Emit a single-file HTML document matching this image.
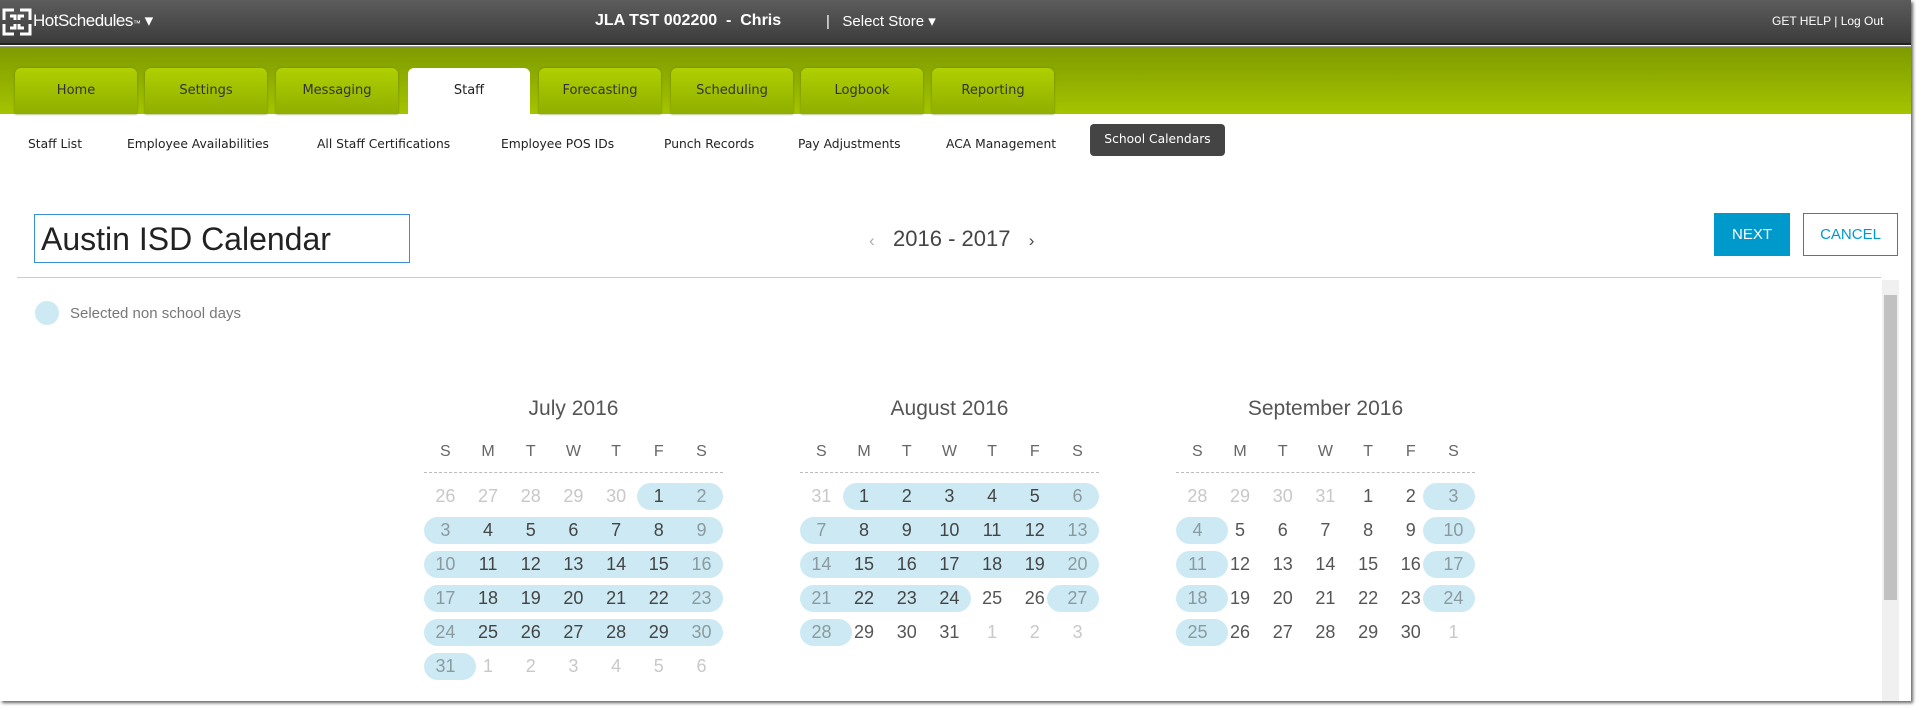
<!DOCTYPE html>
<html><head><meta charset="utf-8"><style>
*{margin:0;padding:0;box-sizing:border-box}
body{width:1927px;height:710px;overflow:hidden;background:#fff;font-family:"Liberation Sans",sans-serif;position:relative}
.win{position:absolute;left:0;top:0;width:1911px;height:701px;background:#fff;box-shadow:2px 2px 3px #666;overflow:hidden}
.top{position:absolute;left:0;top:0;width:100%;height:45px;background:linear-gradient(#5c5c5c,#3c3c3c);border-bottom:2px solid #222}
.green{position:absolute;left:0;top:46px;width:100%;height:68px;background:linear-gradient(#7f9a00,#a4c400);border-top:1px solid #999}
.tab{position:absolute;top:68px;width:122px;height:46px;border-radius:6px 6px 0 0;background:linear-gradient(#b0d000,#8fae00);color:#333;font-family:"DejaVu Sans",sans-serif;font-size:13px;text-align:center;line-height:46px;box-shadow:0 0 2px #6a8000}
.tab.on{background:#fff;color:#222;box-shadow:none}
.w{color:#fff;position:absolute;top:12px;font-size:15px}
.sub{position:absolute;top:137px;font-family:"DejaVu Sans",sans-serif;font-size:12.3px;color:#222}
.cal{position:absolute;top:397px;width:299px}
.cal h3{text-align:center;font-weight:normal;font-size:21px;color:#555;height:46px}
.hd{display:flex;color:#666;font-size:16px;height:30px;border-bottom:1px dashed #bbb;margin-bottom:10px}
.hd span,.r span{width:42.7px;text-align:center}
.r{display:flex;height:27px;line-height:27px;margin-bottom:7px;font-size:18px;color:#555}
.o{color:#c8c8c8}
.s{background:#cdeaf4;color:#444}
.g{color:#8a9a9f}
.l{border-radius:14px 0 0 14px}.rr{border-radius:0 14px 14px 0}.b{border-radius:14px}
.r span.b{width:52px;margin-right:-9.3px;padding-right:9px}
.r span.b.e{margin-right:0;margin-left:-9.3px;padding-right:0;padding-left:9px}
</style></head><body><div class="win">
<div class="top"></div>
<svg style="position:absolute;left:2px;top:8px" width="30" height="28" viewBox="0 0 30 28"><g fill="none" stroke="#fff" stroke-width="3"><path d="M2 12V2h10M18 2h10v10M28 16v10H18M12 26H2V16"/><path d="M8 8h5v4M22 8h-5v4M22 20h-5v-4M8 20h5v-4"/></g></svg>
<div class="w" style="left:33px;top:11px;font-size:17px;letter-spacing:-0.5px">HotSchedules<span style="font-size:8px">™</span> ▾</div>
<div class="w" style="left:595px;font-weight:bold;font-size:16px">JLA TST 002200 &nbsp;- &nbsp;Chris</div>
<div class="w" style="left:826px">| &nbsp;&nbsp;Select Store ▾</div>
<div class="w" style="left:1772px;font-size:12px;top:14px">GET HELP | Log Out</div>
<div class="green"></div>
<div class="tab" style="left:15px">Home</div>
<div class="tab" style="left:145px">Settings</div>
<div class="tab" style="left:276px">Messaging</div>
<div class="tab on" style="left:408px">Staff</div>
<div class="tab" style="left:539px">Forecasting</div>
<div class="tab" style="left:671px">Scheduling</div>
<div class="tab" style="left:801px">Logbook</div>
<div class="tab" style="left:932px">Reporting</div>
<div class="sub" style="left:28px">Staff List</div>
<div class="sub" style="left:127px">Employee Availabilities</div>
<div class="sub" style="left:317px">All Staff Certifications</div>
<div class="sub" style="left:501px">Employee POS IDs</div>
<div class="sub" style="left:664px">Punch Records</div>
<div class="sub" style="left:798px">Pay Adjustments</div>
<div class="sub" style="left:946px">ACA Management</div>
<div style="position:absolute;left:1090px;top:124px;width:135px;height:32px;background:#444;border-radius:4px;color:#fff;font-family:'DejaVu Sans',sans-serif;font-size:12.3px;text-align:center;line-height:30px">School Calendars</div>
<div style="position:absolute;left:34px;top:214px;width:376px;height:49px;border:1px solid #3a8fd0;font-size:32px;color:#222;padding:4px 6px;line-height:40px">Austin ISD Calendar</div>
<div style="position:absolute;left:869px;top:226px;font-size:22px;color:#444"><span style="color:#aaa;font-size:17px">‹</span> &nbsp;&nbsp;2016 - 2017 &nbsp;&nbsp;<span style="font-size:17px">›</span></div>
<div style="position:absolute;left:1714px;top:213px;width:76px;height:43px;background:#0099cc;color:#fff;font-size:15px;text-align:center;line-height:43px">NEXT</div>
<div style="position:absolute;left:1803px;top:213px;width:95px;height:43px;border:1px solid #0099cc;color:#0099cc;font-size:15px;text-align:center;line-height:41px">CANCEL</div>
<div style="position:absolute;left:17px;top:277px;width:1864px;border-top:1px solid #ccc"></div>
<div style="position:absolute;left:1882px;top:280px;width:17px;height:421px;background:#f0f0f0"></div>
<div style="position:absolute;left:1884px;top:295px;width:13px;height:305px;background:#c1c1c1"></div>
<div style="position:absolute;left:35px;top:301px;width:24px;height:24px;border-radius:50%;background:#cdeaf4"></div>
<div style="position:absolute;left:70px;top:305px;font-size:15px;color:#777">Selected non school days</div>

<div class="cal" style="left:424px"><h3>July 2016</h3>
<div class="hd"><span>S</span><span>M</span><span>T</span><span>W</span><span>T</span><span>F</span><span>S</span></div>
<div class="r"><span class="o">26</span><span class="o">27</span><span class="o">28</span><span class="o">29</span><span class="o">30</span><span class="s l">1</span><span class="s rr g">2</span></div>
<div class="r"><span class="s l g">3</span><span class="s">4</span><span class="s">5</span><span class="s">6</span><span class="s">7</span><span class="s">8</span><span class="s rr g">9</span></div>
<div class="r"><span class="s l g">10</span><span class="s">11</span><span class="s">12</span><span class="s">13</span><span class="s">14</span><span class="s">15</span><span class="s rr g">16</span></div>
<div class="r"><span class="s l g">17</span><span class="s">18</span><span class="s">19</span><span class="s">20</span><span class="s">21</span><span class="s">22</span><span class="s rr g">23</span></div>
<div class="r"><span class="s l g">24</span><span class="s">25</span><span class="s">26</span><span class="s">27</span><span class="s">28</span><span class="s">29</span><span class="s rr g">30</span></div>
<div class="r"><span class="s b g">31</span><span class="o">1</span><span class="o">2</span><span class="o">3</span><span class="o">4</span><span class="o">5</span><span class="o">6</span></div>
</div>

<div class="cal" style="left:800px"><h3>August 2016</h3>
<div class="hd"><span>S</span><span>M</span><span>T</span><span>W</span><span>T</span><span>F</span><span>S</span></div>
<div class="r"><span class="o">31</span><span class="s l">1</span><span class="s">2</span><span class="s">3</span><span class="s">4</span><span class="s">5</span><span class="s rr g">6</span></div>
<div class="r"><span class="s l g">7</span><span class="s">8</span><span class="s">9</span><span class="s">10</span><span class="s">11</span><span class="s">12</span><span class="s rr g">13</span></div>
<div class="r"><span class="s l g">14</span><span class="s">15</span><span class="s">16</span><span class="s">17</span><span class="s">18</span><span class="s">19</span><span class="s rr g">20</span></div>
<div class="r"><span class="s l g">21</span><span class="s">22</span><span class="s">23</span><span class="s rr">24</span><span>25</span><span>26</span><span class="s b e g">27</span></div>
<div class="r"><span class="s b g">28</span><span>29</span><span>30</span><span>31</span><span class="o">1</span><span class="o">2</span><span class="o">3</span></div>
</div>

<div class="cal" style="left:1176px"><h3>September 2016</h3>
<div class="hd"><span>S</span><span>M</span><span>T</span><span>W</span><span>T</span><span>F</span><span>S</span></div>
<div class="r"><span class="o">28</span><span class="o">29</span><span class="o">30</span><span class="o">31</span><span>1</span><span>2</span><span class="s b e g">3</span></div>
<div class="r"><span class="s b g">4</span><span>5</span><span>6</span><span>7</span><span>8</span><span>9</span><span class="s b e g">10</span></div>
<div class="r"><span class="s b g">11</span><span>12</span><span>13</span><span>14</span><span>15</span><span>16</span><span class="s b e g">17</span></div>
<div class="r"><span class="s b g">18</span><span>19</span><span>20</span><span>21</span><span>22</span><span>23</span><span class="s b e g">24</span></div>
<div class="r"><span class="s b g">25</span><span>26</span><span>27</span><span>28</span><span>29</span><span>30</span><span class="o">1</span></div>
</div>
</div></body></html>
